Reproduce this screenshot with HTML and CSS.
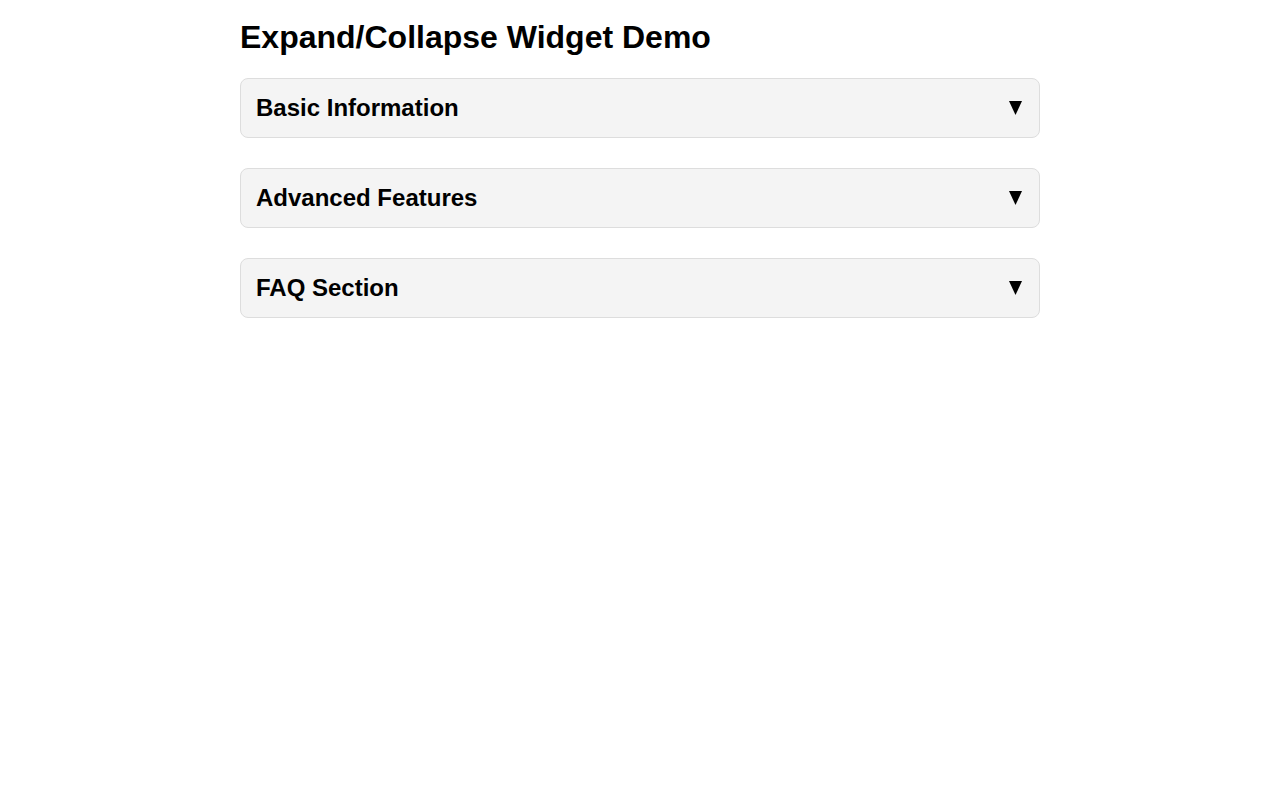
FILE: index.html
```html
<!DOCTYPE html>
<html lang="en">
<head>
    <meta charset="UTF-8">
    <meta name="viewport" content="width=device-width, initial-scale=1.0">
    <title>Expand/Collapse Widget Demo</title>
    <link rel="stylesheet" href="styles.css">
</head>
<body>
    <div class="container">
        <h1>Expand/Collapse Widget Demo</h1>
        <div class="panel">
            <div class="panel-header">
                <h2>Basic Information</h2>
                <svg class="arrow" viewBox="0 0 13 14"><polygon points="0,0 13,0 6.5,14"/></svg>
            </div>
        </div>
        <div class="panel">
            <div class="panel-header">
                <h2>Advanced Features</h2>
                <svg class="arrow" viewBox="0 0 13 14"><polygon points="0,0 13,0 6.5,14"/></svg>
            </div>
        </div>
        <div class="panel">
            <div class="panel-header">
                <h2>FAQ Section</h2>
                <svg class="arrow" viewBox="0 0 13 14"><polygon points="0,0 13,0 6.5,14"/></svg>
            </div>
        </div>
    </div>
</body>
</html>
```

FILE: styles.css
```css
body {
    margin: 0;
    font-family: 'Liberation Sans', Arial, sans-serif;
    color: #000;
    background: #fff;
}
.container {
    max-width: 800px;
    margin: 0 auto;
    padding-top: 19px;
}
h1 {
    font-size: 32px;
    margin: 0 0 22px;
}
.panel {
    border: 1px solid #ddd;
    border-radius: 8px;
    background: #f4f4f4;
    margin-bottom: 30px;
}
.panel-header {
    display: flex;
    align-items: center;
    justify-content: space-between;
    padding: 15px 17px 15px 15px;
    cursor: pointer;
}
.panel-header h2 {
    margin: 0;
    font-size: 24px;
}
.arrow {
    width: 13px;
    height: 14px;
    fill: #000;
    margin-top: -1px;
}
```
